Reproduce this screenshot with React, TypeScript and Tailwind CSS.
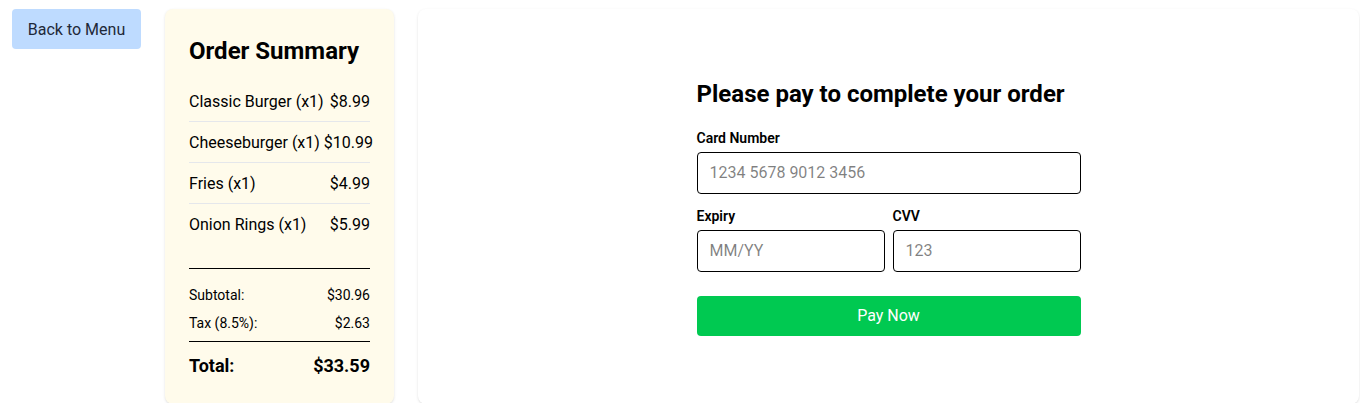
import React from "react";

const items = [
  { name: "Classic Burger (x1)", price: "$8.99" },
  { name: "Cheeseburger (x1)", price: "$10.99" },
  { name: "Fries (x1)", price: "$4.99" },
  { name: "Onion Rings (x1)", price: "$5.99" },
];

function OrderSummary() {
  return (
    <div className="w-[229px] shrink-0 whitespace-nowrap rounded-lg bg-amber-50 p-6 shadow">
      <h2 className="mt-[2px] mb-[14px] text-2xl font-bold text-black">Order Summary</h2>
      <div>
        {items.map((item, i) => (
          <div
            key={item.name}
            className={
              i < items.length - 1
                ? "flex justify-between gap-1 border-b border-gray-200 pt-[9px] pb-[7px]"
                : "flex justify-between gap-1 pt-[9px] pb-[7px]"
            }
          >
            <span>{item.name}</span>
            <span>{item.price}</span>
          </div>
        ))}
      </div>
      <div className="mt-6 border-t border-black pt-4 text-sm">
        <div className="flex justify-between">
          <span>Subtotal:</span>
          <span>$30.96</span>
        </div>
        <div className="mt-2 flex justify-between">
          <span>Tax (8.5%):</span>
          <span>$2.63</span>
        </div>
        <div className="mt-2 flex justify-between border-t border-black pt-[10px] text-lg font-bold">
          <span>Total:</span>
          <span>$33.59</span>
        </div>
      </div>
    </div>
  );
}

function PaymentForm() {
  return (
    <div className="flex flex-1 items-center justify-center rounded-lg bg-white shadow">
      <div className="w-96">
        <h2 className="mb-[18px] whitespace-nowrap text-2xl font-bold text-black">
          Please pay to complete your order
        </h2>
        <label className="mb-1 block text-sm font-semibold">Card Number</label>
        <input
          className="w-full rounded border border-black px-3 py-2 outline-none"
          placeholder="1234 5678 9012 3456"
        />
        <div className="mt-3 flex gap-2">
          <div className="flex-1">
            <label className="mb-1 block text-sm font-semibold">Expiry</label>
            <input
              className="w-full rounded border border-black px-3 py-2 outline-none"
              placeholder="MM/YY"
            />
          </div>
          <div className="flex-1">
            <label className="mb-1 block text-sm font-semibold">CVV</label>
            <input
              className="w-full rounded border border-black px-3 py-2 outline-none"
              placeholder="123"
            />
          </div>
        </div>
        <button className="mt-6 w-full rounded bg-green-500 py-2 text-white">
          Pay Now
        </button>
      </div>
    </div>
  );
}

export default function App() {
  return (
    <div
      className="flex items-stretch gap-6 pl-3 pr-[1px] pt-[9px] text-black"
      style={{ fontFamily: 'Roboto, sans-serif' }}
    >
      <div>
        <button className="w-[129px] whitespace-nowrap rounded bg-blue-200 pt-[9px] pb-[7px] text-gray-800">
          Back to Menu
        </button>
      </div>
      <OrderSummary />
      <PaymentForm />
    </div>
  );
}
